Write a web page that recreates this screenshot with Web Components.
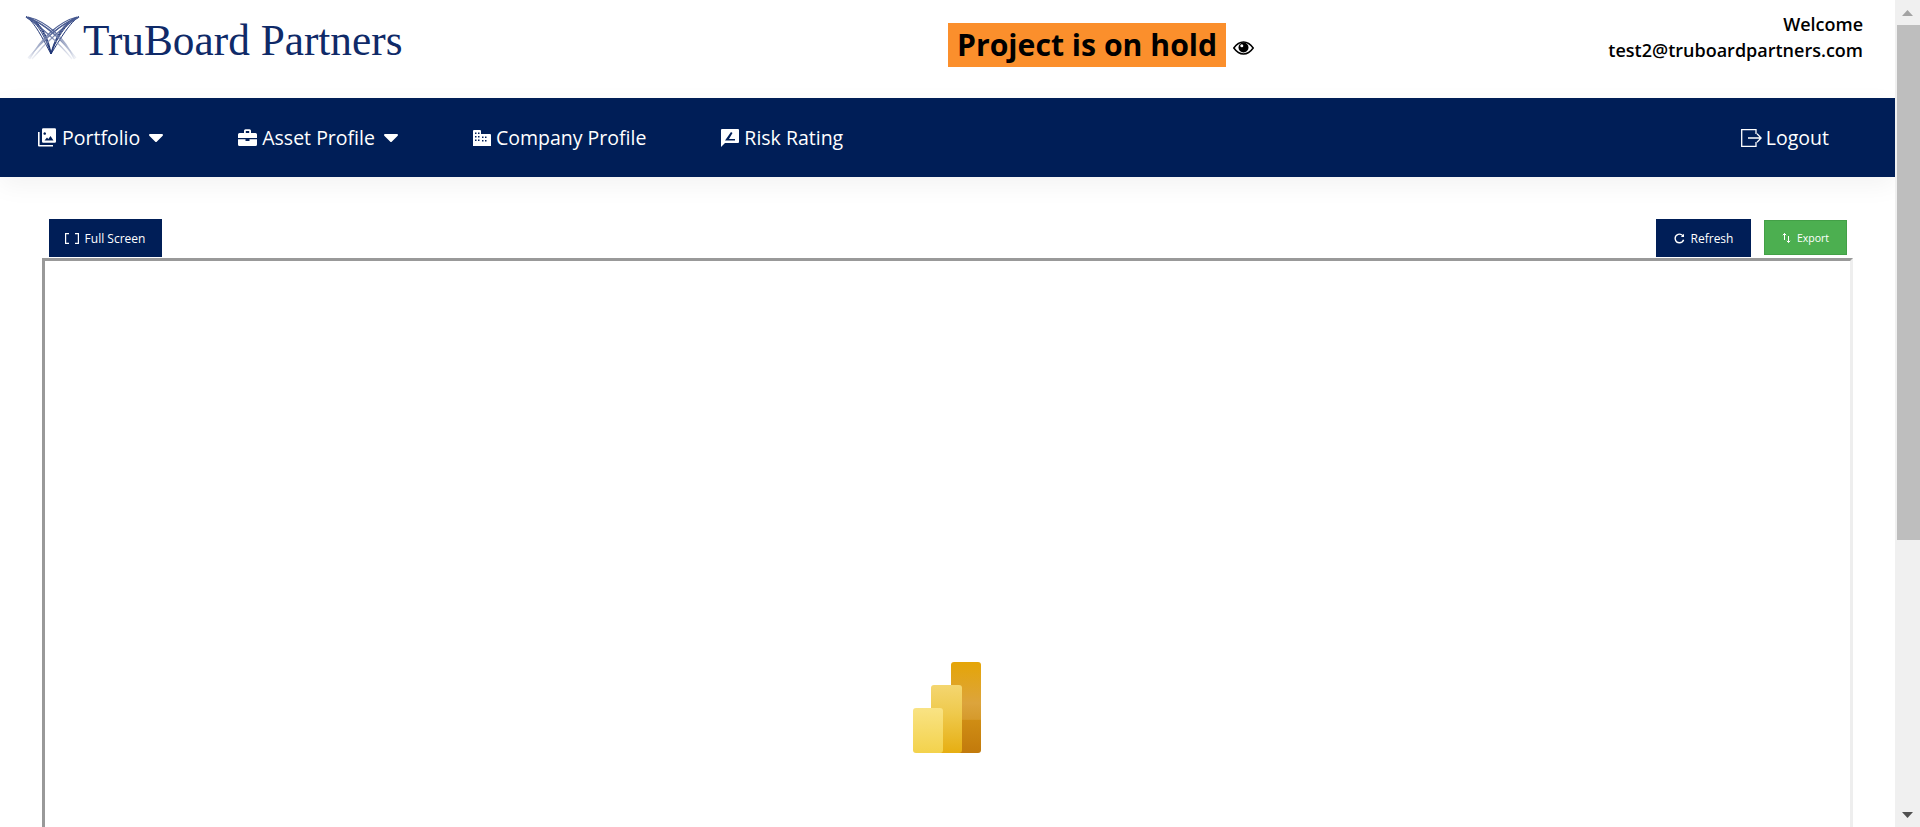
<!DOCTYPE html>
<html><head><meta charset="utf-8"><title>TruBoard Partners</title>
<style>
html,body{margin:0;height:100%;overflow:hidden;background:#fff}
body{display:flex;font-family:"Open Sans","Noto Sans",sans-serif;color:#000}
tb-page{flex:1;min-width:0}
</style></head><body>
<tb-page>
<tb-header></tb-header>
<tb-nav></tb-nav>
<tb-report></tb-report>
</tb-page>
<tb-scrollbar></tb-scrollbar>
<script>
function def(name, html){
  customElements.define(name, class extends HTMLElement{
    constructor(){super();this.attachShadow({mode:'open'}).innerHTML=html;}
  });
}
def('tb-page',`<style>:host{display:block;height:827px;overflow:hidden}</style><slot></slot>`);
def('tb-scrollbar',`<style>
:host{display:flex;flex-direction:column;width:25px;flex:none;background:#f0f0f0;height:827px;padding-left:2px;box-sizing:border-box}
.up{height:25px;display:flex;align-items:center;justify-content:center;margin-left:-2px}
.th{height:515px;background:#bebebe}
.sp{flex:1}
.dn{height:25px;display:flex;align-items:center;justify-content:center;margin-left:-2px}
</style>
<div class="up"><svg width="11" height="6" viewBox="0 0 11 6"><path d="M5.5 0L11 6H0z" fill="#a3a3a3"/></svg></div>
<div class="th"></div><div class="sp"></div>
<div class="dn"><svg width="11" height="6" viewBox="0 0 11 6"><path d="M0 0H11L5.5 6z" fill="#505050"/></svg></div>`);
def('tb-logo',`<style>
:host{display:flex;align-items:flex-start;height:70px}
svg{display:block;flex:none;margin-top:12px}
span{font:43.3px/1 "Liberation Serif",serif;color:#0f2a68;margin:19px 0 0 0;white-space:nowrap;display:inline-block}
</style>
<svg width="60" height="56" viewBox="22 12 60 56" fill="none">
<defs>
<linearGradient id="f" gradientUnits="userSpaceOnUse" x1="0" y1="30" x2="0" y2="60"><stop offset="0" stop-color="#4a5c92"/><stop offset="1" stop-color="#e8ebf2" stop-opacity=".5"/></linearGradient>
</defs>
<g stroke="#1f3576" stroke-width="1">
<path d="M25 17C35 20 44 36 50 54"/><path d="M25 17C37 19 46 37 50 54"/><path d="M25 17C39 19 48 39 50 54"/><path d="M25 17C33 21 42 39 50 54"/>
<path d="M78 17C68 20 56 36 50 54"/><path d="M78 17C66 19 55 37 50 54"/><path d="M78 17C64 19 53 39 50 54"/><path d="M78 17C70 21 59 39 50 54"/>
</g>
<g stroke="url(#f)" stroke-width="1.200">
<path d="M25 17C42 23 62 39 74 59"/><path d="M27 17C44 21 64 37 73 59"/><path d="M25 17C38 25 58 43 71 59"/><path d="M30 19C46 25 62 41 75 58"/>
<path d="M78 17C62 23 40 39 28 59"/><path d="M76 17C60 21 40 37 29 59"/><path d="M78 17C64 25 44 43 31 59"/><path d="M73 19C58 25 42 41 27 58"/>
</g>
</svg><span>TruBoard Partners</span>`);
def('tb-header',`<style>
:host{display:flex;align-items:flex-start;height:98px;box-sizing:border-box;padding-left:23px}
.c{display:flex;align-items:center;margin:23px 0 0 0}
.hold{background:#fb8f2c;font-size:30.2px;font-weight:700;line-height:44px;height:44px;padding:0 9px;white-space:nowrap;color:#000}
.eye{margin-left:7px;display:block;position:relative;top:3px}
.u{flex:1;text-align:right;font-size:18px;font-weight:600;line-height:26px;padding:11px 32px 0 0;white-space:nowrap;color:#000}
.logo{width:925px;flex:none}
</style>
<div class="logo"><tb-logo></tb-logo></div>
<div class="c"><div class="hold">Project is on hold</div>
<svg class="eye" width="21" height="14" viewBox="0 0 21 14"><path d="M.8 7C4 2.5 7 1 10.500 1S17 2.500 20.200 7C17 11.500 14 13 10.500 13S4 11.500 .8 7Z" fill="#fff" stroke="#000" stroke-width="1.500"/><circle cx="10.500" cy="6.500" r="5" fill="#000"/><circle cx="8.800" cy="4.800" r="1.500" fill="#fff"/></svg></div>
<div class="u">Welcome<br>test2@truboardpartners.com</div>`);
def('tb-nav-item',`<style>
:host{display:flex;align-items:center;color:#fff;font-size:19.500px;white-space:nowrap;gap:5px}
::slotted(svg){display:block;flex:none}
</style><slot></slot>`);
def('tb-nav',`<style>
:host{display:flex;align-items:center;height:79px;background:#001e57;box-shadow:0 8px 24px rgba(0,0,0,.05);position:relative;padding-left:37px;padding-right:66px}
tb-nav-item{margin-right:75px}
tb-nav-item.last{margin:0 0 0 auto;gap:4px}
.car{margin-left:4px}
</style>
<tb-nav-item><svg width="20" height="19" viewBox="0 0 20 19" fill="#fff"><path d="M1 4v13.500a1 1 0 001 1h14v-1.600H2.600V4z"/><path fill-rule="evenodd" d="M5 1.500A1.200 1.200 0 016.200.3h11.600A1.200 1.200 0 0119 1.500v12a1.200 1.200 0 01-1.200 1.200H6.200A1.200 1.200 0 015 13.500zM7.500 12.500h9l-3-4.500-2.200 3-1.300-1.500zM9 5.500a1.300 1.300 0 100 .01z"/></svg>Portfolio<svg class="car" width="14" height="8" viewBox="0 0 14 8"><path d="M1 0H13a1 1 0 01.7 1.700L7.700 7.700a1 1 0 01-1.400 0L.3 1.700A1 1 0 011 0z" fill="#fff"/></svg></tb-nav-item>
<tb-nav-item><svg width="19" height="17" viewBox="0 0 19 17" fill="#fff"><path fill-rule="evenodd" d="M6 4V1.800A1.500 1.500 0 017.500.3h4A1.500 1.500 0 0113 1.800V4h4.500A1.500 1.500 0 0119 5.500V9H0V5.500A1.500 1.500 0 011.500 4zM7.800 4h3.400V2H7.800z"/><path d="M0 10.200h7.500V12h4v-1.800H19v5.300a1.500 1.500 0 01-1.500 1.500h-16A1.500 1.500 0 010 15.500z"/></svg>Asset Profile<svg class="car" width="14" height="8" viewBox="0 0 14 8"><path d="M1 0H13a1 1 0 01.7 1.700L7.700 7.700a1 1 0 01-1.400 0L.3 1.700A1 1 0 011 0z" fill="#fff"/></svg></tb-nav-item>
<tb-nav-item><svg width="18" height="16" viewBox="0 0 18 16" fill="#fff"><path fill-rule="evenodd" d="M0 1a1 1 0 011-1h6a1 1 0 011 1v3h9a1 1 0 011 1v11H0zM2 2.500v1.500h1.500V2.500zM5 2.500v1.500h1.500V2.500zM2 6v1.500h1.500V6zM5 6v1.500h1.500V6zM2 9.500V11h1.500V9.500zM5 9.500V11h1.500V9.500zM9 6.500V8h1.500V6.500zM12 6.500V8h1.500V6.500zM9 10v1.500h1.500V10zM12 10v1.500h1.500V10z"/></svg>Company Profile</tb-nav-item>
<tb-nav-item style="margin-right:0"><svg width="18" height="18" viewBox="0 0 18 18" fill="#fff"><path fill-rule="evenodd" d="M1 0h16a1 1 0 011 1v12a1 1 0 01-1 1H4l-4 4V1a1 1 0 011-1zM4 11.500h10V10H8l3.500-6-1.500-1z"/></svg>Risk Rating</tb-nav-item>
<tb-nav-item class="last"><svg width="21" height="18" viewBox="0 0 21 18" fill="none" stroke="#fff" stroke-width="1.300"><path d="M15 5V.7H.7v16.600H15V13"/><path d="M7 9H20M16 4.800L20.200 9 16 13.200"/></svg>Logout</tb-nav-item>`);
def('tb-btn',`<style>
:host{display:flex;align-items:center;justify-content:center;gap:6px;box-sizing:border-box;color:#fff;font-size:12px;background:var(--bg,#001e57);height:38px;white-space:nowrap}
::slotted(svg){display:block;flex:none}
</style><slot></slot>`);
def('tb-powerbi',`<style>:host{display:block;margin-right:2px}svg{display:block}</style>
<svg width="68" height="92" viewBox="0 0 68 92">
<defs>
<linearGradient id="r" x1="0" y1="0" x2="0" y2="1"><stop offset="0" stop-color="#e5a507"/><stop offset=".45" stop-color="#dca43c"/><stop offset=".63" stop-color="#d59a2c"/><stop offset=".64" stop-color="#cf8d14"/><stop offset="1" stop-color="#c27a0c"/></linearGradient>
<linearGradient id="m" x1="0" y1="0" x2="0" y2="1"><stop offset="0" stop-color="#f4d670"/><stop offset=".4" stop-color="#efca4e"/><stop offset="1" stop-color="#e6ae12"/></linearGradient>
<linearGradient id="l" x1="0" y1="0" x2="0" y2="1"><stop offset="0" stop-color="#f9e384"/><stop offset="1" stop-color="#f3d24c"/></linearGradient>
</defs>
<rect x="38" y="0" width="30" height="91" rx="3" fill="url(#r)"/>
<rect x="18" y="23" width="31" height="68" rx="3" fill="url(#m)"/>
<rect x="0" y="46" width="30" height="45" rx="3" fill="url(#l)"/>
</svg>`);
def('tb-report',`<style>
:host{display:block;padding:42px 0 0 42px}
.bar{display:flex;align-items:flex-start;padding:0 48px 0 7px;gap:13px;height:39px}
.fs{width:113px;gap:6px;padding-right:1px}
.rf{width:95px;margin-left:auto}
.ex{width:83px;height:35px;--bg:#4caf50;border:1px solid #43a047;margin-top:1px;font-size:10.500px}
.frame{box-sizing:border-box;width:1811px;height:900px;border:3px solid;border-color:#999 #eee #eee #999;padding-top:401px;display:flex;justify-content:center}
</style>
<div class="bar">
<tb-btn class="fs"><svg width="14" height="11" viewBox="0 0 14 11" fill="none" stroke="#fff" stroke-width="1.200"><path d="M4 .6H.6v9.800H4M10 .6h3.400v9.800H10"/></svg>Full Screen</tb-btn>
<tb-btn class="rf"><svg width="11" height="11" viewBox="0 0 11 11" fill="none" stroke="#fff" stroke-width="1.400"><path d="M9.300 3.500A4.300 4.300 0 105.500 9.800 4.300 4.300 0 009.600 6.800"/><path d="M10 .8V4H6.800z" fill="#fff" stroke="none"/></svg>Refresh</tb-btn>
<tb-btn class="ex"><svg width="9" height="10" viewBox="0 0 9 10" fill="none" stroke="#fff" stroke-width="1"><path d="M2.500 7V.5M.8 2.200L2.500.5 4.200 2.200M6.500 3v6.500M4.800 7.800L6.500 9.500 8.200 7.800"/></svg>Export</tb-btn>
</div>
<div class="frame"><tb-powerbi></tb-powerbi></div>`);
</script>
</body></html>
